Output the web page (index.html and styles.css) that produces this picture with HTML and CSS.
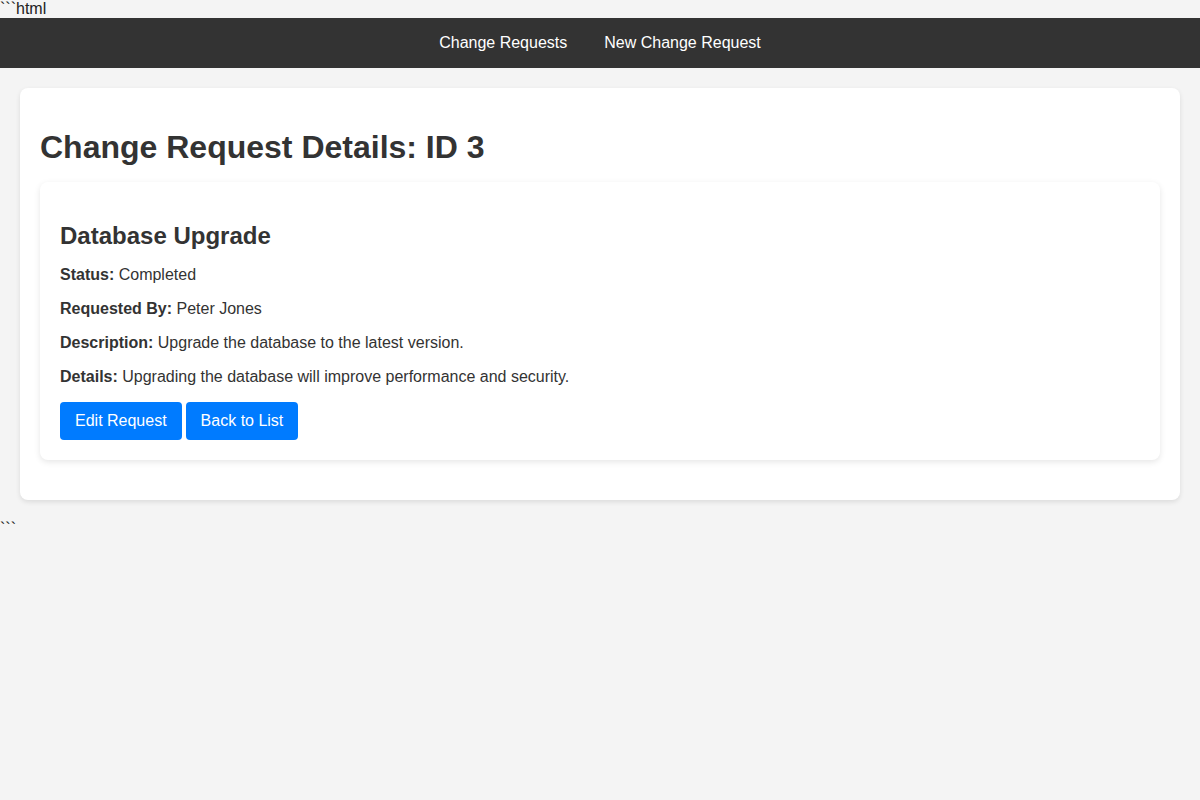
FILE: index.html
```html
<!DOCTYPE html>
<html lang="en">
<head>
<meta charset="utf-8">
<title>Change Request Details</title>
<link rel="stylesheet" href="styles.css">
</head>
<body>
<div class="fence">```html</div>
<nav class="topnav">
  <a href="#" class="navlink">Change Requests</a>
  <a href="#" class="navlink">New Change Request</a>
</nav>
<main class="container">
  <h1 class="page-title">Change Request Details: ID 3</h1>
  <section class="card">
    <h2 class="card-title">Database Upgrade</h2>
    <p class="field"><strong>Status:</strong> Completed</p>
    <p class="field"><strong>Requested By:</strong> Peter Jones</p>
    <p class="field"><strong>Description:</strong> Upgrade the database to the latest version.</p>
    <p class="field"><strong>Details:</strong> Upgrading the database will improve performance and security.</p>
    <div class="actions">
      <a href="#" class="btn">Edit Request</a>
      <a href="#" class="btn">Back to List</a>
    </div>
  </section>
</main>
<div class="fence">```</div>
</body>
</html>
```

FILE: styles.css
```css
html, body {
  margin: 0;
  padding: 0;
}
body {
  font-family: "Liberation Sans", Arial, sans-serif;
  background: #f4f4f4;
  color: #333;
  font-size: 16px;
}
.fence {
  color: #222;
  line-height: 18px;
}
.topnav {
  background: #333;
  height: 50px;
  display: flex;
  justify-content: center;
  align-items: center;
  gap: 37px;
}
.navlink {
  color: #fff;
  text-decoration: none;
}
.container {
  display: block;
  margin: 20px;
  padding: 20px;
  background: #fff;
  border-radius: 8px;
  box-shadow: 0 2px 5px rgba(0, 0, 0, 0.1);
}
.page-title {
  font-size: 32px;
  margin: 21px 0 16px;
}
.card {
  background: #fff;
  border-radius: 8px;
  box-shadow: 0 2px 6px rgba(0, 0, 0, 0.1);
  padding: 20px;
  margin-bottom: 20px;
}
.card-title {
  font-size: 24px;
  margin: 20px 0 16px;
}
.field {
  margin: 16px 0;
}
.actions {
  display: flex;
  gap: 4px;
}
.btn {
  display: inline-block;
  background: #007bff;
  color: #fff;
  text-decoration: none;
  padding: 10px 15px;
  border-radius: 4px;
}
```
